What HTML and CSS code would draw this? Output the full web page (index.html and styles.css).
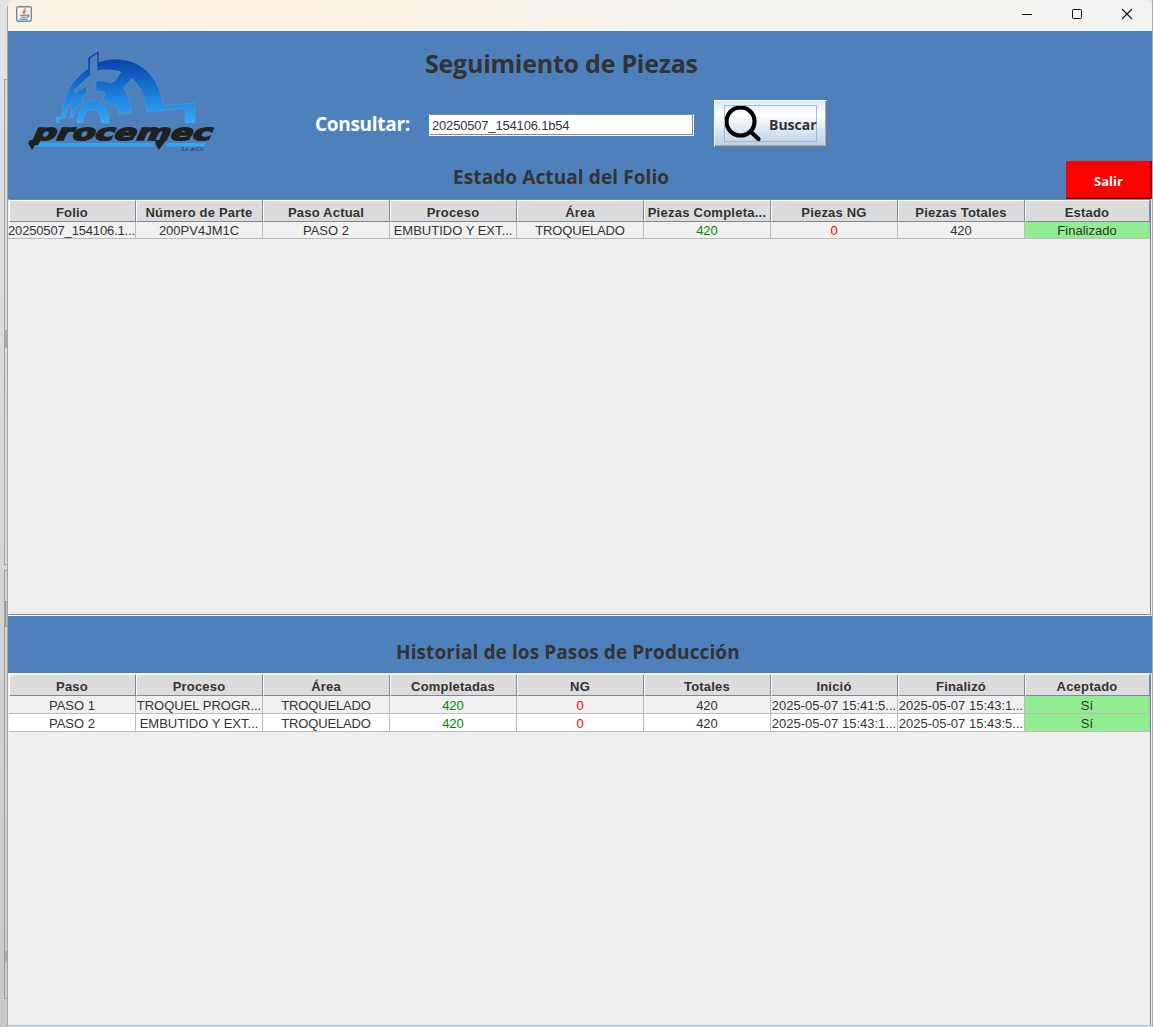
FILE: index.html
```html
<!DOCTYPE html>
<html lang="es">
<head>
<meta charset="utf-8">
<title>Seguimiento de Piezas</title>
<link rel="stylesheet" href="styles.css">
</head>
<body>
<div class="desktop">
  <svg class="behind" width="8" height="1027" viewBox="0 0 8 1027" shape-rendering="crispEdges">
    <rect x="5" y="80" width="3" height="485" fill="#dadada"/>
    <path d="M8 79.5H4.500V564.500H8" fill="none" stroke="#a3a3a3"/>
    <rect x="5" y="330" width="3" height="18" fill="#aaa"/>
    <path d="M8 570.500H4.500V998.500H8" fill="none" stroke="#a0a0a0"/>
    <rect x="5" y="601" width="3" height="25" fill="#b8b8b8" stroke="#999"/>
    <rect x="5" y="951" width="3" height="11" fill="#aaa"/>
    <rect x="7" y="6" width="1" height="1020" fill="#a6a6a6"/>
  </svg>
  <main class="window">
    <header class="titlebar">
      <svg width="16" height="16" viewBox="0 0 16 16">
        <rect x=".7" y=".7" width="14.600" height="14.600" rx="1.500" fill="#f4f6f7" stroke="#6f8ea5" stroke-width="1.400"/>
        <path d="M9.500 2C10 4 5.500 5 7.500 8M10.500 4.500C8.500 5.500 8 6.500 9 8" fill="none" stroke="#ef8022" stroke-width="1.300"/>
        <path d="M4 9.300h7.500M5 11.200h5.500M3.500 13.200h8.500M11 9c3-1 2.500 2 0 2.300" fill="none" stroke="#507a96" stroke-width="1.100"/>
      </svg>
      <div class="controls">
        <svg width="12" height="12" viewBox="0 0 12 12"><path d="M1 6.500h10" stroke="#111"/></svg>
        <svg width="12" height="12" viewBox="0 0 12 12"><rect x="1.500" y="1.500" width="9" height="9" rx=".8" fill="none" stroke="#111"/></svg>
        <svg width="12" height="12" viewBox="0 0 12 12"><path d="M1 1l10 10M11 1L1 11" stroke="#111" stroke-width="1.100"/></svg>
      </div>
    </header>
    <section class="banner">
      <svg class="logo" width="192" height="106" viewBox="24 48 192 106">
        <defs><linearGradient id="arc" gradientUnits="userSpaceOnUse" x1="0" y1="51" x2="0" y2="123">
          <stop offset="0" stop-color="#2b2f9b"/><stop offset=".15" stop-color="#0a45ae"/><stop offset=".55" stop-color="#1878d2"/><stop offset="1" stop-color="#34aaff"/>
        </linearGradient></defs>
        <g fill="url(#arc)" stroke="#6fa5d4" stroke-width=".35">
          <path d="M88 57.700L99 50.700V62C112 57 127 58 139 65C154 74 161 89 163 105.500L195 103V123H185V108.500L147 112C145 97 141 87 132 78.500L123 88C128 95 131 103 131 113.500L119.500 114L117 105L111 106L103 100L105 93L102 91H96V81Q103 80 110 83L115 81L121 72Q108 68 97 71V54L90.500 58.500V75L74 90L75 93L87 86V93L81 98L83 103L77 107L73 118H69L72 106L69 104L65 118L60 119L59 123H56V117H61.500C63 95 72 79 88 69Z"/>
          <path d="M77 123C78 93 109 93 109.500 123H101C102 105 83 105 83 123Z"/>
        </g>
        <path d="M37 143h116l2 3.500H34zM167 143h39l-2 3.500h-38z" fill="#32a7fa"/>
        <path d="M30 140h8l-6 10-4-7zM155 140h11l-7 10-3-5z" fill="#202020"/>
        <text class="wordmark" transform="translate(31 139.500) skewX(-24)" x="0" y="0" textLength="179" lengthAdjust="spacingAndGlyphs">procemec</text>
        <text class="legal" x="181" y="151" textLength="23">S.A. de C.V.</text>
      </svg>
      <div class="search">
        <h1>Seguimiento de Piezas</h1>
        <div class="query">
          <label for="folio">Consultar:</label>
          <input id="folio" value="20250507_154106.1b54">
          <button class="find">
            <span class="focus">
              <svg width="38" height="36" viewBox="0 0 38 36"><circle cx="15.500" cy="15.500" r="14" fill="none" stroke="#000" stroke-width="4.200"/><path d="M25.500 25.500l8 7.500" stroke="#000" stroke-width="4.200" stroke-linecap="round"/></svg>
              <span>Buscar</span>
            </span>
          </button>
        </div>
        <h2>Estado Actual del Folio</h2>
      </div>
      <button class="exit">Salir</button>
    </section>
    <section class="pane current">
      <div class="row head"><span>Folio</span><span>Número de Parte</span><span>Paso Actual</span><span>Proceso</span><span>Área</span><span class="full">Piezas Completa...</span><span>Piezas NG</span><span>Piezas Totales</span><span>Estado</span></div>
      <div class="row odd"><span class="folio">20250507_154106.1...</span><span>200PV4JM1C</span><span>PASO 2</span><span>EMBUTIDO Y EXT...</span><span class="area">TROQUELADO</span><span class="good">420</span><span class="bad">0</span><span>420</span><span class="done">Finalizado</span></div>
    </section>
    <h2 class="history-title">Historial de los Pasos de Producción</h2>
    <section class="pane history">
      <div class="row head"><span>Paso</span><span>Proceso</span><span>Área</span><span>Completadas</span><span>NG</span><span>Totales</span><span>Inició</span><span>Finalizó</span><span>Aceptado</span></div>
      <div class="row odd"><span>PASO 1</span><span>TROQUEL PROGR...</span><span class="area">TROQUELADO</span><span class="good">420</span><span class="bad">0</span><span>420</span><span>2025-05-07 15:41:5...</span><span>2025-05-07 15:43:1...</span><span class="done">Sí</span></div>
      <div class="row"><span>PASO 2</span><span>EMBUTIDO Y EXT...</span><span class="area">TROQUELADO</span><span class="good">420</span><span class="bad">0</span><span>420</span><span>2025-05-07 15:43:1...</span><span>2025-05-07 15:43:5...</span><span class="done">Sí</span></div>
    </section>
  </main>
  <div class="edge"></div>
</div>
</body>
</html>
```
FILE: styles.css
```css
* { box-sizing: border-box; }
body { margin: 0; overflow: hidden; font-family: "Liberation Sans", Arial, sans-serif; color: #333; }
.desktop { display: grid; grid-template-columns: 8px 1144px 1px; width: 1153px; height: 1027px; background: linear-gradient(#e4e4e4, #c8c8c8); }
.behind { display: block; }
.edge { background: #aaa; }
.window { display: flex; flex-direction: column; height: 1026px; background: #eee; border-bottom: 1px solid #b5bdc4; border-radius: 7px 7px 0 0; overflow: hidden; box-shadow: 0 1px #d5e5ed; }
.titlebar { flex: 0 0 31px; display: flex; justify-content: space-between; padding: 6px 19px 0 8px; background: linear-gradient(90deg, #f9f1e3 0, #fbf2e2 25%, #f5f3ee 60%, #f3f3f1 100%); }
.controls { display: flex; gap: 38px; padding-top: 2px; }
.banner { flex: 0 0 168px; display: grid; grid-template-columns: 192px 1fr 86px; padding-left: 16px; background: #4e81bb; }
.logo { margin-top: 17px; }
.wordmark { font: bold 22px "DejaVu Sans", sans-serif; fill: #202020; stroke: #202020; stroke-width: 1.5px; stroke-linejoin: miter; }
.legal { font: italic 5px "Liberation Sans", sans-serif; fill: #334; }
.search { padding-left: 99px; }
h1, h2 { margin: 0; font-family: "Open Sans", "Noto Sans", sans-serif; font-weight: 700; white-space: nowrap; }
h1 { padding: 16px 0 0 110px; font-size: 25px; line-height: 32px; letter-spacing: -.24px; }
h2 { font-size: 19px; line-height: 26px; letter-spacing: .1px; }
.search h2 { padding: 17px 0 0 138px; }
.query { display: flex; align-items: center; height: 47px; margin-top: 21px; }
.query label { width: 114px; margin-top: 1px; font: bold 19px/26px "Open Sans", sans-serif; letter-spacing: -.3px; color: #fff; }
.query input { width: 265px; height: 22px; margin-top: 2px; padding: 1px 2px 0; border: 1px solid #fff; border-top-color: #7a8a99; box-shadow: inset -1px -1px #7a8a99; font: 13px "Liberation Sans", sans-serif; letter-spacing: -.18px; color: #333; }
.find { width: 113px; height: 47px; margin-left: 20px; padding: 4px 8px 6px 9px; border: 1px solid #fff; border-right: 1px solid #777; border-bottom: 1px solid #777; box-shadow: inset -1px -1px #aaa; background: linear-gradient(#dde8f3, #fff 30%, #b8cfe5); }
.focus { display: flex; align-items: center; gap: 6px; width: 93px; height: 37px; border: 1px solid #a3b8cc; white-space: nowrap; font: bold 14px "Open Sans", sans-serif; color: #333; }
.focus svg { flex: none; }
.focus span { padding-top: 2px; }
.exit { align-self: end; width: 86px; height: 38px; border: 0; border-right: 1px solid #800; border-bottom: 1px solid #800; box-shadow: inset -1px -1px #b20000; background: #f00; color: #fff; font: bold 13px "Open Sans", sans-serif; padding-top: 3px; }
.pane { border: 1px solid #7a8a99; border-left-color: #eee; background: #eee; box-shadow: inset 0 1px #fff; width: 1143px; }
.current { flex: 0 0 416px; height: 416px; }
.history { flex: 1; border-bottom: 0; border-top-color: #eee; }
.row { display: grid; grid-template-columns: repeat(8, 127px) 125px; height: 18px; background: #fff; font-size: 13px; line-height: 17px; text-align: center; }
.row span { overflow: hidden; white-space: nowrap; border-right: 1px solid #bbb; border-bottom: 1px solid #bbb; }
.row.odd { background: #f0f0f0; }
.row.head { height: 22px; background: #dcdcdc; font-weight: bold; line-height: 23px; letter-spacing: .2px; }
.row.head span { border: 1px solid #7a8a99; border-left-color: #fff; border-top-color: #fff; padding-right: 1px; }
.row .folio { letter-spacing: -.16px; text-align: left; margin-left: -1px; }
.row .area { letter-spacing: -.15px; }
.row.head .full { letter-spacing: .25px; }
.good { color: #080; }
.bad { color: #f00; }
.row .done { background: #90ee90; }
.current .row.odd { height: 17px; }
.history .row:not(.head) { line-height: 19px; }
.history-title { flex: 0 0 58px; padding: 22.500px 0 0 388px; background: #4e81bb; border-top: 1px solid #fff; }
```
